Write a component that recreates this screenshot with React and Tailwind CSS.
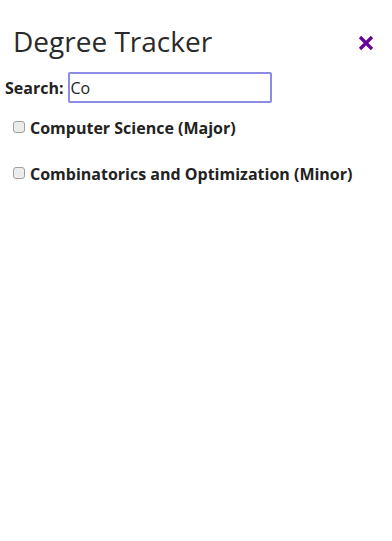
import { useState } from "react";

const programs = [
  { id: 1, name: "Computer Science (Major)" },
  { id: 2, name: "Combinatorics and Optimization (Minor)" },
];

const App = () => {
  const [search, setSearch] = useState("Co");
  const [checked, setChecked] = useState({});

  const lista = programs.filter((p) =>
    p.name.toLowerCase().includes(search.toLowerCase())
  );

  return (
    <div className="w-[392px] h-[541px] bg-white text-[#222] font-['Open_Sans',sans-serif]">
      <div className="flex items-center justify-between pl-[13px] pr-[18px] pt-[22px]">
        <h1 className="text-[28px] leading-[38px] font-[500] text-[#2a2a2a]">Degree Tracker</h1>
        <button className="text-[#660099] mt-[4px]">
          <svg width="16" height="16" viewBox="0 0 16 16">
            <path d="M2 2 L14 14 M14 2 L2 14" stroke="currentColor" strokeWidth="3.2" strokeLinecap="butt" />
          </svg>
        </button>
      </div>

      <div className="flex items-center pl-[5px] mt-[12px]">
        <label className="font-bold text-[16px] mr-[4px]">Search:</label>
        <input
          type="text"
          value={search}
          onChange={(e) => setSearch(e.target.value)}
          className="w-[204px] h-[31px] border-2 border-[#8c8ce6] rounded-[2px] px-[1px] text-[16px] outline-none"
        />
      </div>

      <div className="pl-[13px] mt-[14px] flex flex-col gap-[24px]">
        {lista.map((p) => (
          <label key={p.id} className="flex items-center gap-[5px] font-bold text-[16px] leading-[22px]">
            <input
              type="checkbox"
              checked={!!checked[p.id]}
              onChange={(e) => setChecked({ ...checked, [p.id]: e.target.checked })}
              className="appearance-none w-[12px] h-[12px] m-0 mb-[2px] border border-[#a0a0a0] rounded-[3px] bg-[#ececec] checked:bg-[#660099]"
            />
            {p.name}
          </label>
        ))}
      </div>
    </div>
  );
};

export default App;
